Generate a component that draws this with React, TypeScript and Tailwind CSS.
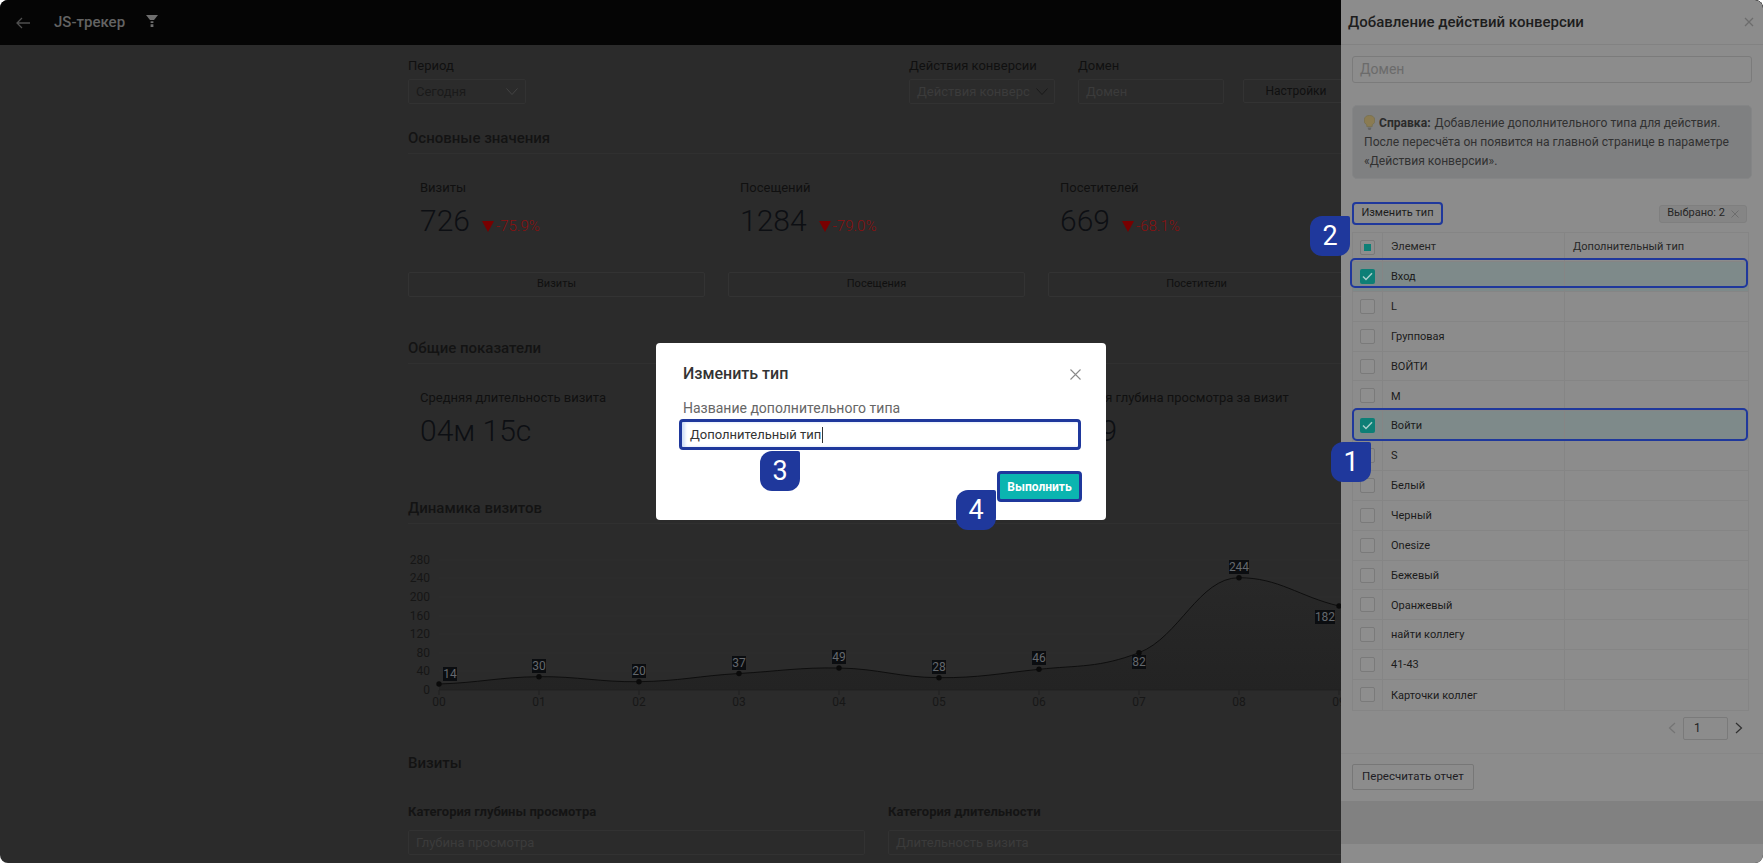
import React from "react";

const F = { fontFamily: '"Roboto","Liberation Sans",sans-serif' };

function Badge({ n, cls }: { n: number; cls: string }) {
  return (
    <div className={`absolute z-30 flex h-10 w-10 items-center justify-center rounded-[12px] rounded-tr-[2px] bg-[#1f389c] text-[27px] leading-none text-white ${cls}`}>
      {n}
    </div>
  );
}

function Stat({ label, value, delta, btn }: { label: string; value: string; delta: string; btn: string }) {
  return (
    <div className="flex flex-col">
      <div className="ml-3 mt-[24px] text-[13px] leading-[20px] text-[#101010]">{label}</div>
      <div className="ml-3 mt-[5px] flex h-[36px] items-center">
        <span className="text-[30px] font-light leading-none text-[#0d0f13]">{value}</span>
        <span className="ml-[12px] mt-[11px] flex items-center gap-[2px] text-[15px] font-light leading-none text-[#8a1010]">
          <svg width="12" height="11" viewBox="0 0 12 11"><path d="M0 0h12L6 11z" fill="#780000" /></svg>
          {delta}
        </span>
      </div>
      <div className="mt-[33px] flex h-[25px] items-center justify-center rounded-[2px] border border-[#333333] text-[11px] text-[#101010]">{btn}</div>
    </div>
  );
}

function SectionTitle({ children }: { children: React.ReactNode }) {
  return <div className="h-[31px] border-b border-[#303030] pt-[5px] text-[15px] font-medium leading-[20px] text-[#131313]">{children}</div>;
}

const pts: [number, number, string, number, number][] = [
  [31, 160, "14", 42, 150],
  [131, 152.7, "30", 131, 142],
  [231, 157.7, "20", 231, 147],
  [331, 149.5, "37", 331, 139],
  [431, 144, "49", 431, 133],
  [531, 153.7, "28", 531, 143],
  [631, 145.3, "46", 631, 134],
  [731, 128.7, "82", 731, 138],
  [831, 53.7, "244", 831, 43],
  [931, 82, "182", 917, 93],
];

function curve() {
  const p = [...pts.map((q) => [q[0], q[1]]), [1031, 110]];
  const slope = (i: number) => (i === 8 ? 0 : (p[Math.min(i + 1, p.length - 1)][1] - p[Math.max(i - 1, 0)][1]) / 6);
  let d = `M${p[0][0]} ${p[0][1]}`;
  for (let i = 0; i < p.length - 1; i++) {
    const p1 = p[i];
    const p2 = p[i + 1];
    d += ` C${p1[0] + 40} ${p1[1] + slope(i)} ${p2[0] - 40} ${p2[1] - slope(i + 1)} ${p2[0]} ${p2[1]}`;
  }
  return d;
}

function Chart() {
  const ticks: [string, number][] = [["280", 36], ["240", 54], ["200", 73], ["160", 92], ["120", 110], ["80", 129], ["40", 147], ["0", 166]];
  const line = curve();
  return (
    <svg width="937" height="195" className="block" style={F}>
      <defs>
        <linearGradient id="area" x1="0" y1="0" x2="0" y2="1">
          <stop offset="0" stopColor="#282828" />
          <stop offset="1" stopColor="#232323" />
        </linearGradient>
      </defs>
      {ticks.map(([t, y]) => (
        <g key={t}>
          <line x1="31" x2="937" y1={y} y2={y} stroke="#2e2e2e" />
          <text x="22" y={y + 4} textAnchor="end" fontSize="12" fill="#161616">{t}</text>
        </g>
      ))}
      <path d={`${line} L1031 166 L31 166 Z`} fill="url(#area)" />
      <path d={line} fill="none" stroke="#0e0e0e" strokeWidth="1" />
      <line x1="31" x2="937" y1="166" y2="166" stroke="#202020" />
      {pts.map((q, i) => (
        <g key={q[2]}>
          <line x1={q[0]} x2={q[0]} y1="166" y2="171" stroke="#202020" />
          <text x={q[0]} y="182" textAnchor="middle" fontSize="12" fill="#171717">{`0${i}`}</text>
          <circle cx={q[0]} cy={q[1]} r="2.7" fill="#0a0a0a" />
          <rect x={q[3] - (q[2].length > 2 ? 10 : 7)} y={q[4] - 7} width={q[2].length > 2 ? 20 : 14} height="14" fill="#0b0d10" />
          <text x={q[3]} y={q[4] + 4} textAnchor="middle" fontSize="12" fill="#64686d">{q[2]}</text>
        </g>
      ))}
    </svg>
  );
}

function Check({ state }: { state?: "on" | "mixed" }) {
  if (state === "on")
    return (
      <div className="flex h-[15px] w-[15px] items-center justify-center rounded-[2px] bg-[#0d7f76]">
        <svg width="11" height="9" viewBox="0 0 11 9" fill="none"><path d="M1 4.5 4 7.5 10 1.2" stroke="#a9cfcb" strokeWidth="1.5" /></svg>
      </div>
    );
  return (
    <div className="flex h-[15px] w-[15px] items-center justify-center rounded-[2px] border border-[#7a7a7a] bg-[#8e8e8e]">
      {state === "mixed" && <div className="h-[7px] w-[7px] bg-[#0d7f76]" />}
    </div>
  );
}

const rows: [string, boolean][] = [
  ["Вход", true], ["L", false], ["Групповая", false], ["ВОЙТИ", false], ["М", false], ["Войти", true], ["S", false], ["Белый", false], ["Черный", false], ["Onesize", false], ["Бежевый", false], ["Оранжевый", false], ["найти коллегу", false], ["41-43", false], ["Карточки коллег", false],
];

function Drawer() {
  return (
    <div className="absolute inset-y-0 right-0 z-10 flex w-[422px] flex-col rounded-tr-[8px] rounded-br-[8px] bg-[#8c8c8c] text-[#1c1c1c]">
      <div className="flex h-[45px] flex-none items-center justify-between border-b border-[#828282] pl-[7px] pr-[9px]">
        <span className="text-[15px] font-medium text-[#1d1d1d]">Добавление действий конверсии</span>
        <svg width="10" height="10" viewBox="0 0 10 10" stroke="#6c6c6c" strokeWidth="1.2"><path d="M1 1l8 8M9 1l-8 8" /></svg>
      </div>
      <div className="px-[11px]">
        <div className="mt-[11px] flex h-[27px] items-center rounded-[3px] border border-[#7b7b7b] px-[7px] text-[14px] text-[#6b6b6b]">Домен</div>
        <div className="mt-[22px] h-[74px] rounded-[5px] border border-[#848586] bg-[#7f8081] px-[11px] pt-[8px] text-[12.1px] leading-[19px] text-[#313131]">
          <div className="whitespace-nowrap">
            <svg width="11" height="15" viewBox="0 0 11 15" className="mr-[4px] inline-block align-[-3px]">
              <path d="M5.5.5A5 5 0 0 0 2.8 9.9v1.6h5.4V9.9A5 5 0 0 0 5.5.5z" fill="#8a7b52" stroke="#77704f" strokeWidth=".8" />
              <path d="M3.5 12.5h4L6.5 15h-2z" fill="#666666" />
            </svg>
            <b className="mr-[4px] font-bold text-[#2b2b2b]">Справка:</b>Добавление дополнительного типа для действия.
          </div>
          <div className="whitespace-nowrap">После пересчёта он появится на главной странице в параметре</div>
          <div>«Действия конверсии».</div>
        </div>
        <div className="mt-[23px] flex h-[23px] items-center justify-between pr-[5px]">
          <div className="flex h-[23px] w-[91px] items-center justify-center rounded-[4px] border-2 border-[#1f389c] text-[11px] text-[#1c1c1c]">Изменить тип</div>
          <div className="flex h-[18px] w-[88px] items-center justify-center gap-[6px] rounded-[3px] border border-[#7f7f7f] bg-[#858585] text-[11px] text-[#262626]">
            Выбрано: 2
            <svg width="8" height="8" viewBox="0 0 8 8" stroke="#6d6d6d" strokeWidth="1"><path d="M.5.5l7 7M7.5.5l-7 7" /></svg>
          </div>
        </div>
        <div className="mr-[3px] mt-[7px] border border-[#858585] text-[11px]">
          <div className="grid h-[29px] grid-cols-[30px_182px_1fr] border-b border-[#858585] text-[#262626]">
            <div className="flex items-center justify-center border-r border-[#858585]"><Check state="mixed" /></div>
            <div className="flex items-center border-r border-[#858585] pl-[8px] pt-[1px]">Элемент</div>
            <div className="flex items-center pl-[8px] pt-[1px]">Дополнительный тип</div>
          </div>
          {rows.map(([t, on]) => (
            <div key={t} className={`grid h-[29.86px] grid-cols-[30px_182px_1fr] border-b border-[#858585] last:border-b-0 ${on ? "bg-[#7e8a8a]" : ""}`}>
              <div className="flex items-center justify-center border-r border-[#858585]"><Check state={on ? "on" : undefined} /></div>
              <div className="flex items-center border-r border-[#858585] pl-[8px] pt-[2px] text-[#1b1b1b]">{t}</div>
              <div />
            </div>
          ))}
        </div>
        <div className="mt-[6px] flex h-[23px] items-center justify-end gap-[7px] pr-[1px]">
          <svg width="8" height="12" viewBox="0 0 8 12" fill="none" stroke="#747474" strokeWidth="1.2"><path d="M7 1 1.5 6 7 11" /></svg>
          <div className="flex h-[23px] w-[45px] items-center rounded-[2px] border border-[#7a7a7a] pl-[10px] text-[12px] text-[#222]">1</div>
          <svg width="8" height="12" viewBox="0 0 8 12" fill="none" stroke="#303030" strokeWidth="1.2"><path d="M1 1l5.5 5L1 11" /></svg>
          <div className="w-[1px]" />
        </div>
      </div>
      <div className="mt-[13px] border-t border-[#878787] px-[11px] pt-[10px]">
        <div className="flex h-[26px] w-[122px] items-center justify-center rounded-[2px] border border-[#777777] text-[11.5px] text-[#201c24]">Пересчитать отчет</div>
      </div>
      <div className="mt-[11px] h-[43px] bg-[#818181]" />
    </div>
  );
}

function Modal() {
  return (
    <div className="absolute left-[656px] top-[343px] z-20 h-[177px] w-[450px] rounded-[4px] bg-white">
      <div className="flex items-center justify-between pl-[27px] pr-[25px] pt-[20px]">
        <span className="text-[16px] font-medium leading-[22px] text-[#333333]">Изменить тип</span>
        <svg width="11" height="11" viewBox="0 0 11 11" stroke="#8a8a8a" strokeWidth="1.1"><path d="M.5.5l10 10M10.5.5l-10 10" /></svg>
      </div>
      <div className="ml-[27px] mt-[15px] text-[14px] leading-[16px] text-[#666666]">Название дополнительного типа</div>
      <div className="ml-[23px] mt-[3px] flex h-[31px] w-[402px] items-center rounded-[4px] border-[3px] border-[#1f389c] pl-[8px] text-[13px] text-[#333333] shadow-[inset_3px_0_3px_rgba(120,160,230,0.35)]">
        Дополнительный тип<span className="ml-[1px] h-[16px] w-px bg-[#333333]" />
      </div>
      <div className="ml-[341px] mt-[21px] flex h-[31px] w-[85px] items-center justify-center rounded-[4px] border-[3px] border-[#1f389c] bg-[#0bb5b0] text-[12px] font-bold text-white">Выполнить</div>
    </div>
  );
}

export default function App() {
  return (
    <div className="relative h-[863px] w-full overflow-hidden rounded-[8px] bg-[#2b2b2b]" style={F}>
      <div className="flex h-[45px] items-center bg-[#050505]">
        <svg width="14" height="12" viewBox="0 0 14 12" fill="none" stroke="#4f4f4f" strokeWidth="1.3" className="ml-[16px]"><path d="M14 6H1M6 1 1 6l5 5" /></svg>
        <span className="ml-[24px] text-[15px] font-medium text-[#636363]">JS-трекер</span>
        <svg width="12" height="12" viewBox="0 0 12 12" fill="#6e6e6e" className="mb-[3px] ml-[21px]"><path d="M0 0h12L8 5H4z" /><path d="M4.6 6.2h2.8V8H4.6zM4.6 9.2h2.8V12H4.6z" /></svg>
      </div>

      <div className="ml-[408px] w-[937px]">
        <div className="flex h-[78px] items-start pt-[11px]">
          <div className="w-[118px] flex-none">
            <div className="text-[13px] leading-[20px] text-[#101010]">Период</div>
            <div className="mt-[3px] flex h-[25px] items-center justify-between rounded-[2px] border border-[#323232] pl-[7px] pr-[7px] text-[13px] text-[#1a1a1a]">
              Сегодня
              <svg width="12" height="7" viewBox="0 0 12 7" fill="none" stroke="#444" strokeWidth="1"><path d="M.5.5 6 6.5 11.5.5" /></svg>
            </div>
          </div>
          <div className="ml-[383px] w-[146px] flex-none">
            <div className="text-[13px] leading-[20px] text-[#101010]">Действия конверсии</div>
            <div className="mt-[3px] flex h-[25px] items-center justify-between rounded-[2px] border border-[#323232] pl-[7px] pr-[6px] text-[13px] text-[#3b3b3b]">
              <span className="whitespace-nowrap">Действия конверс</span>
              <svg width="12" height="7" viewBox="0 0 12 7" fill="none" stroke="#1a1a1a" strokeWidth="1" className="flex-none"><path d="M.5.5 6 6.5 11.5.5" /></svg>
            </div>
          </div>
          <div className="ml-[23px] w-[146px] flex-none">
            <div className="text-[13px] leading-[20px] text-[#101010]">Домен</div>
            <div className="mt-[3px] flex h-[25px] items-center rounded-[2px] border border-[#323232] pl-[7px] text-[13px] text-[#3b3b3b]">Домен</div>
          </div>
          <div className="ml-[19px] mt-[23px] flex h-[24px] w-[106px] flex-none items-center justify-center rounded-[2px] border border-[#333333] text-[12px] text-[#101010]">Настройки</div>
        </div>

        <SectionTitle>Основные значения</SectionTitle>
        <div className="grid grid-cols-[297px_297px_297px] gap-x-[23px]">
          <Stat label="Визиты" value="726" delta="-75.9%" btn="Визиты" />
          <Stat label="Посещений" value="1284" delta="-79.0%" btn="Посещения" />
          <Stat label="Посетителей" value="669" delta="-68.1%" btn="Посетители" />
        </div>

        <div className="mt-[36px]"><SectionTitle>Общие показатели</SectionTitle></div>
        <div className="grid h-[129px] grid-cols-[297px_297px_297px] gap-x-[23px]">
          {[["Средняя длительность визита", "04м 15с"], ["Среднее число просмотров", "1.77"], ["Средняя глубина просмотра за визит", "1.89"]].map(([a, b]) => (
            <div key={a} className="pl-3 pt-[24px]">
              <div className="whitespace-nowrap text-[13px] leading-[20px] text-[#101010]">{a}</div>
              <div className="mt-[5px] flex h-[36px] items-center text-[30px] font-light leading-none text-[#0d0f13]">{b}</div>
            </div>
          ))}
        </div>

        <SectionTitle>Динамика визитов</SectionTitle>
        <Chart />

        <div className="mt-[34px] text-[15px] font-medium leading-[20px] text-[#131313]">Визиты</div>
        <div className="mt-[29px] grid grid-cols-[457px_457px] gap-x-[23px]">
          {[["Категория глубины просмотра", "Глубина просмотра"], ["Категория длительности", "Длительность визита"]].map(([a, b]) => (
            <div key={a}>
              <div className="text-[13px] font-bold leading-[20px] text-[#141414]">{a}</div>
              <div className="mt-[8px] flex h-[25px] items-center rounded-[2px] border border-[#323232] pl-[7px] text-[13px] text-[#3b3b3b]">{b}</div>
            </div>
          ))}
        </div>
      </div>

      <Drawer />
      <Modal />

      <div className="pointer-events-none absolute left-[1350px] top-[258px] z-20 h-[30px] w-[398px] rounded-[5px] border-2 border-[#1f389c]" />
      <div className="pointer-events-none absolute left-[1352px] top-[408px] z-20 h-[33px] w-[396px] rounded-[5px] border-2 border-[#1f389c]" />

      <Badge n={2} cls="left-[1310px] top-[216px]" />
      <Badge n={1} cls="left-[1331px] top-[442px]" />
      <Badge n={3} cls="left-[760px] top-[451px]" />
      <Badge n={4} cls="left-[956px] top-[490px]" />
    </div>
  );
}
